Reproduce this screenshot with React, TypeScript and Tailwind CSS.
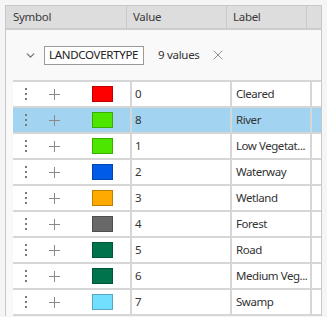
import { ChevronDown, X } from 'lucide-react'

const rows = [
  { value: '0', label: 'Cleared', color: 'bg-[#ff0000]' },
  { value: '8', label: 'River', color: 'bg-[#4ce600]', selected: true },
  { value: '1', label: 'Low Vegetat...', color: 'bg-[#4ce600]' },
  { value: '2', label: 'Waterway', color: 'bg-[#005ce6]' },
  { value: '3', label: 'Wetland', color: 'bg-[#ffaa00]' },
  { value: '4', label: 'Forest', color: 'bg-[#686868]' },
  { value: '5', label: 'Road', color: 'bg-[#00734c]' },
  { value: '6', label: 'Medium Veg...', color: 'bg-[#00734c]' },
  { value: '7', label: 'Swamp', color: 'bg-[#73dfff]' },
]

function Dots() {
  return (
    <div className="flex flex-col gap-[3px]">
      <span className="h-[2px] w-[2px] bg-[#7a7a7a]" />
      <span className="h-[2px] w-[2px] bg-[#7a7a7a]" />
      <span className="h-[2px] w-[2px] bg-[#7a7a7a]" />
    </div>
  )
}

function Plus() {
  return (
    <svg width="11" height="11" viewBox="0 0 11 11">
      <path d="M5.5 0v11M0 5.5h11" stroke="#8a8a8a" strokeWidth="1" />
    </svg>
  )
}

export default function App() {
  return (
    <div className="h-[317px] w-[327px] overflow-hidden bg-[#f4f5f4] pl-[5px] pt-[5px] font-['Noto_Sans',sans-serif] text-[11.5px] tracking-[-0.3px] whitespace-nowrap text-[#333]">
      <div className="w-[317px] border-l border-r border-t border-[#c8c8c8]">
        <div className="flex h-[24px] border-b-2 border-[#cccccc] bg-[#dddddd] text-[#3a3a3a]">
          <div className="flex w-[121px] items-center border-r border-[#c9c9c9] pl-[7px]">Symbol</div>
          <div className="flex w-[100px] items-center border-r border-[#c9c9c9] pl-[6px]">Value</div>
          <div className="flex w-[80px] items-center border-r border-[#c9c9c9] pl-[6px]">Label</div>
          <div className="flex-1" />
        </div>

        <div className="flex h-[50px] items-center bg-[#f8f9f8] pl-[18px]">
          <ChevronDown size={13} strokeWidth={2.5} className="text-[#777]" />
          <div className="ml-[7px] flex h-[19px] w-[100px] items-center overflow-hidden border border-[#9a9a9a] bg-white pl-[4px] text-[#222]">
            LANDCOVERTYPE
          </div>
          <span className="ml-[14px]">9 values</span>
          <X size={16} strokeWidth={1.4} className="ml-[10px] text-[#8a8a8a]" />
        </div>

        <div className="bg-[#f8f9f8] pl-[7px]">
          {rows.map((r) => (
            <div
              key={r.value}
              className={`flex h-[26px] border-t-2 border-[#d6d6d6] ${r.selected ? 'bg-[#a2d3f1]' : 'bg-white'}`}
            >
              <div className="flex w-[119px] items-center border-r-2 border-[#d6d6d6]">
                <div className="ml-[12px]">
                  <Dots />
                </div>
                <div className="ml-[22px]">
                  <Plus />
                </div>
                <div className={`ml-[32px] h-[16px] w-[21px] border border-black/25 ${r.color}`} />
              </div>
              <div className="flex w-[100px] items-center border-r-2 border-[#d6d6d6] pl-[3px]">{r.value}</div>
              <div className="flex w-[80px] items-center overflow-hidden border-r-2 border-[#d6d6d6] pl-[4px] tracking-[-0.45px]">
                {r.label}
              </div>
              <div className="flex-1" />
            </div>
          ))}
          <div className="h-[2px] bg-[#d6d6d6]" />
        </div>
      </div>
    </div>
  )
}
